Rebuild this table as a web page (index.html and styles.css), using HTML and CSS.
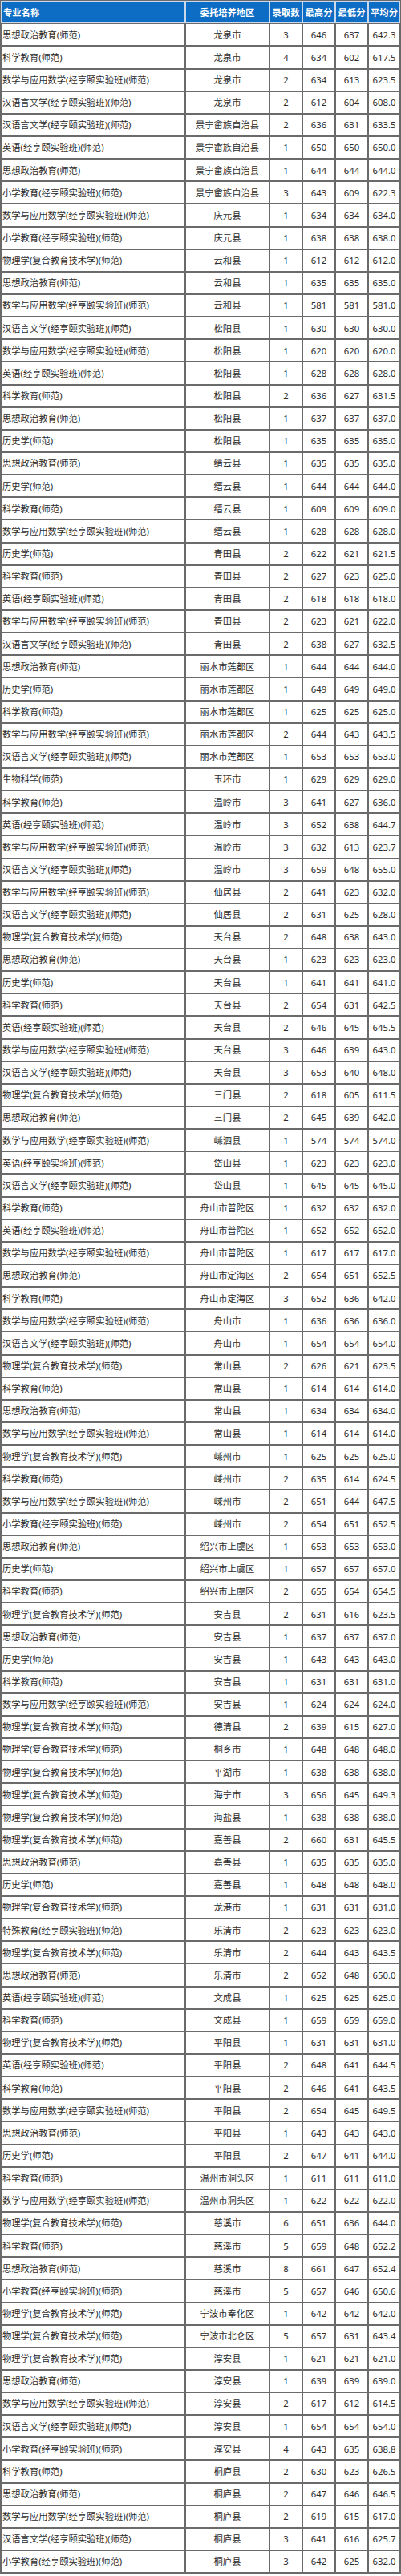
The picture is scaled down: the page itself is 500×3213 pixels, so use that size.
FILE: index.html
```html
<!DOCTYPE html>
<html lang="zh-CN">
<head>
<meta charset="utf-8">
<title>委托培养录取分数</title>
<link rel="stylesheet" href="styles.css">
</head>
<body>
<div class="table" role="table">
  <div class="row head" role="row">
    <div class="cell name" role="columnheader">专业名称</div>
    <div class="cell" role="columnheader">委托培养地区</div>
    <div class="cell" role="columnheader">录取数</div>
    <div class="cell" role="columnheader">最高分</div>
    <div class="cell" role="columnheader">最低分</div>
    <div class="cell" role="columnheader">平均分</div>
  </div>
  <div class="row"><div class="cell name">思想政治教育(师范)</div><div class="cell">龙泉市</div><div class="cell">3</div><div class="cell">646</div><div class="cell">637</div><div class="cell">642.3</div></div>
  <div class="row"><div class="cell name">科学教育(师范)</div><div class="cell">龙泉市</div><div class="cell">4</div><div class="cell">634</div><div class="cell">602</div><div class="cell">617.5</div></div>
  <div class="row"><div class="cell name">数学与应用数学(经亨颐实验班)(师范)</div><div class="cell">龙泉市</div><div class="cell">2</div><div class="cell">634</div><div class="cell">613</div><div class="cell">623.5</div></div>
  <div class="row"><div class="cell name">汉语言文学(经亨颐实验班)(师范)</div><div class="cell">龙泉市</div><div class="cell">2</div><div class="cell">612</div><div class="cell">604</div><div class="cell">608.0</div></div>
  <div class="row"><div class="cell name">汉语言文学(经亨颐实验班)(师范)</div><div class="cell">景宁畲族自治县</div><div class="cell">2</div><div class="cell">636</div><div class="cell">631</div><div class="cell">633.5</div></div>
  <div class="row"><div class="cell name">英语(经亨颐实验班)(师范)</div><div class="cell">景宁畲族自治县</div><div class="cell">1</div><div class="cell">650</div><div class="cell">650</div><div class="cell">650.0</div></div>
  <div class="row"><div class="cell name">思想政治教育(师范)</div><div class="cell">景宁畲族自治县</div><div class="cell">1</div><div class="cell">644</div><div class="cell">644</div><div class="cell">644.0</div></div>
  <div class="row"><div class="cell name">小学教育(经亨颐实验班)(师范)</div><div class="cell">景宁畲族自治县</div><div class="cell">3</div><div class="cell">643</div><div class="cell">609</div><div class="cell">622.3</div></div>
  <div class="row"><div class="cell name">数学与应用数学(经亨颐实验班)(师范)</div><div class="cell">庆元县</div><div class="cell">1</div><div class="cell">634</div><div class="cell">634</div><div class="cell">634.0</div></div>
  <div class="row"><div class="cell name">小学教育(经亨颐实验班)(师范)</div><div class="cell">庆元县</div><div class="cell">1</div><div class="cell">638</div><div class="cell">638</div><div class="cell">638.0</div></div>
  <div class="row"><div class="cell name">物理学(复合教育技术学)(师范)</div><div class="cell">云和县</div><div class="cell">1</div><div class="cell">612</div><div class="cell">612</div><div class="cell">612.0</div></div>
  <div class="row"><div class="cell name">思想政治教育(师范)</div><div class="cell">云和县</div><div class="cell">1</div><div class="cell">635</div><div class="cell">635</div><div class="cell">635.0</div></div>
  <div class="row"><div class="cell name">数学与应用数学(经亨颐实验班)(师范)</div><div class="cell">云和县</div><div class="cell">1</div><div class="cell">581</div><div class="cell">581</div><div class="cell">581.0</div></div>
  <div class="row"><div class="cell name">汉语言文学(经亨颐实验班)(师范)</div><div class="cell">松阳县</div><div class="cell">1</div><div class="cell">630</div><div class="cell">630</div><div class="cell">630.0</div></div>
  <div class="row"><div class="cell name">数学与应用数学(经亨颐实验班)(师范)</div><div class="cell">松阳县</div><div class="cell">1</div><div class="cell">620</div><div class="cell">620</div><div class="cell">620.0</div></div>
  <div class="row"><div class="cell name">英语(经亨颐实验班)(师范)</div><div class="cell">松阳县</div><div class="cell">1</div><div class="cell">628</div><div class="cell">628</div><div class="cell">628.0</div></div>
  <div class="row"><div class="cell name">科学教育(师范)</div><div class="cell">松阳县</div><div class="cell">2</div><div class="cell">636</div><div class="cell">627</div><div class="cell">631.5</div></div>
  <div class="row"><div class="cell name">思想政治教育(师范)</div><div class="cell">松阳县</div><div class="cell">1</div><div class="cell">637</div><div class="cell">637</div><div class="cell">637.0</div></div>
  <div class="row"><div class="cell name">历史学(师范)</div><div class="cell">松阳县</div><div class="cell">1</div><div class="cell">635</div><div class="cell">635</div><div class="cell">635.0</div></div>
  <div class="row"><div class="cell name">思想政治教育(师范)</div><div class="cell">缙云县</div><div class="cell">1</div><div class="cell">635</div><div class="cell">635</div><div class="cell">635.0</div></div>
  <div class="row"><div class="cell name">历史学(师范)</div><div class="cell">缙云县</div><div class="cell">1</div><div class="cell">644</div><div class="cell">644</div><div class="cell">644.0</div></div>
  <div class="row"><div class="cell name">科学教育(师范)</div><div class="cell">缙云县</div><div class="cell">1</div><div class="cell">609</div><div class="cell">609</div><div class="cell">609.0</div></div>
  <div class="row"><div class="cell name">数学与应用数学(经亨颐实验班)(师范)</div><div class="cell">缙云县</div><div class="cell">1</div><div class="cell">628</div><div class="cell">628</div><div class="cell">628.0</div></div>
  <div class="row"><div class="cell name">历史学(师范)</div><div class="cell">青田县</div><div class="cell">2</div><div class="cell">622</div><div class="cell">621</div><div class="cell">621.5</div></div>
  <div class="row"><div class="cell name">科学教育(师范)</div><div class="cell">青田县</div><div class="cell">2</div><div class="cell">627</div><div class="cell">623</div><div class="cell">625.0</div></div>
  <div class="row"><div class="cell name">英语(经亨颐实验班)(师范)</div><div class="cell">青田县</div><div class="cell">2</div><div class="cell">618</div><div class="cell">618</div><div class="cell">618.0</div></div>
  <div class="row"><div class="cell name">数学与应用数学(经亨颐实验班)(师范)</div><div class="cell">青田县</div><div class="cell">2</div><div class="cell">623</div><div class="cell">621</div><div class="cell">622.0</div></div>
  <div class="row"><div class="cell name">汉语言文学(经亨颐实验班)(师范)</div><div class="cell">青田县</div><div class="cell">2</div><div class="cell">638</div><div class="cell">627</div><div class="cell">632.5</div></div>
  <div class="row"><div class="cell name">思想政治教育(师范)</div><div class="cell">丽水市莲都区</div><div class="cell">1</div><div class="cell">644</div><div class="cell">644</div><div class="cell">644.0</div></div>
  <div class="row"><div class="cell name">历史学(师范)</div><div class="cell">丽水市莲都区</div><div class="cell">1</div><div class="cell">649</div><div class="cell">649</div><div class="cell">649.0</div></div>
  <div class="row"><div class="cell name">科学教育(师范)</div><div class="cell">丽水市莲都区</div><div class="cell">1</div><div class="cell">625</div><div class="cell">625</div><div class="cell">625.0</div></div>
  <div class="row"><div class="cell name">数学与应用数学(经亨颐实验班)(师范)</div><div class="cell">丽水市莲都区</div><div class="cell">2</div><div class="cell">644</div><div class="cell">643</div><div class="cell">643.5</div></div>
  <div class="row"><div class="cell name">汉语言文学(经亨颐实验班)(师范)</div><div class="cell">丽水市莲都区</div><div class="cell">1</div><div class="cell">653</div><div class="cell">653</div><div class="cell">653.0</div></div>
  <div class="row"><div class="cell name">生物科学(师范)</div><div class="cell">玉环市</div><div class="cell">1</div><div class="cell">629</div><div class="cell">629</div><div class="cell">629.0</div></div>
  <div class="row"><div class="cell name">科学教育(师范)</div><div class="cell">温岭市</div><div class="cell">3</div><div class="cell">641</div><div class="cell">627</div><div class="cell">636.0</div></div>
  <div class="row"><div class="cell name">英语(经亨颐实验班)(师范)</div><div class="cell">温岭市</div><div class="cell">3</div><div class="cell">652</div><div class="cell">638</div><div class="cell">644.7</div></div>
  <div class="row"><div class="cell name">数学与应用数学(经亨颐实验班)(师范)</div><div class="cell">温岭市</div><div class="cell">3</div><div class="cell">632</div><div class="cell">613</div><div class="cell">623.7</div></div>
  <div class="row"><div class="cell name">汉语言文学(经亨颐实验班)(师范)</div><div class="cell">温岭市</div><div class="cell">3</div><div class="cell">659</div><div class="cell">648</div><div class="cell">655.0</div></div>
  <div class="row"><div class="cell name">数学与应用数学(经亨颐实验班)(师范)</div><div class="cell">仙居县</div><div class="cell">2</div><div class="cell">641</div><div class="cell">623</div><div class="cell">632.0</div></div>
  <div class="row"><div class="cell name">汉语言文学(经亨颐实验班)(师范)</div><div class="cell">仙居县</div><div class="cell">2</div><div class="cell">631</div><div class="cell">625</div><div class="cell">628.0</div></div>
  <div class="row"><div class="cell name">物理学(复合教育技术学)(师范)</div><div class="cell">天台县</div><div class="cell">2</div><div class="cell">648</div><div class="cell">638</div><div class="cell">643.0</div></div>
  <div class="row"><div class="cell name">思想政治教育(师范)</div><div class="cell">天台县</div><div class="cell">1</div><div class="cell">623</div><div class="cell">623</div><div class="cell">623.0</div></div>
  <div class="row"><div class="cell name">历史学(师范)</div><div class="cell">天台县</div><div class="cell">1</div><div class="cell">641</div><div class="cell">641</div><div class="cell">641.0</div></div>
  <div class="row"><div class="cell name">科学教育(师范)</div><div class="cell">天台县</div><div class="cell">2</div><div class="cell">654</div><div class="cell">631</div><div class="cell">642.5</div></div>
  <div class="row"><div class="cell name">英语(经亨颐实验班)(师范)</div><div class="cell">天台县</div><div class="cell">2</div><div class="cell">646</div><div class="cell">645</div><div class="cell">645.5</div></div>
  <div class="row"><div class="cell name">数学与应用数学(经亨颐实验班)(师范)</div><div class="cell">天台县</div><div class="cell">3</div><div class="cell">646</div><div class="cell">639</div><div class="cell">643.0</div></div>
  <div class="row"><div class="cell name">汉语言文学(经亨颐实验班)(师范)</div><div class="cell">天台县</div><div class="cell">3</div><div class="cell">653</div><div class="cell">640</div><div class="cell">648.0</div></div>
  <div class="row"><div class="cell name">物理学(复合教育技术学)(师范)</div><div class="cell">三门县</div><div class="cell">2</div><div class="cell">618</div><div class="cell">605</div><div class="cell">611.5</div></div>
  <div class="row"><div class="cell name">思想政治教育(师范)</div><div class="cell">三门县</div><div class="cell">2</div><div class="cell">645</div><div class="cell">639</div><div class="cell">642.0</div></div>
  <div class="row"><div class="cell name">数学与应用数学(经亨颐实验班)(师范)</div><div class="cell">嵊泗县</div><div class="cell">1</div><div class="cell">574</div><div class="cell">574</div><div class="cell">574.0</div></div>
  <div class="row"><div class="cell name">英语(经亨颐实验班)(师范)</div><div class="cell">岱山县</div><div class="cell">1</div><div class="cell">623</div><div class="cell">623</div><div class="cell">623.0</div></div>
  <div class="row"><div class="cell name">汉语言文学(经亨颐实验班)(师范)</div><div class="cell">岱山县</div><div class="cell">1</div><div class="cell">645</div><div class="cell">645</div><div class="cell">645.0</div></div>
  <div class="row"><div class="cell name">科学教育(师范)</div><div class="cell">舟山市普陀区</div><div class="cell">1</div><div class="cell">632</div><div class="cell">632</div><div class="cell">632.0</div></div>
  <div class="row"><div class="cell name">英语(经亨颐实验班)(师范)</div><div class="cell">舟山市普陀区</div><div class="cell">1</div><div class="cell">652</div><div class="cell">652</div><div class="cell">652.0</div></div>
  <div class="row"><div class="cell name">数学与应用数学(经亨颐实验班)(师范)</div><div class="cell">舟山市普陀区</div><div class="cell">1</div><div class="cell">617</div><div class="cell">617</div><div class="cell">617.0</div></div>
  <div class="row"><div class="cell name">思想政治教育(师范)</div><div class="cell">舟山市定海区</div><div class="cell">2</div><div class="cell">654</div><div class="cell">651</div><div class="cell">652.5</div></div>
  <div class="row"><div class="cell name">科学教育(师范)</div><div class="cell">舟山市定海区</div><div class="cell">3</div><div class="cell">652</div><div class="cell">636</div><div class="cell">642.0</div></div>
  <div class="row"><div class="cell name">数学与应用数学(经亨颐实验班)(师范)</div><div class="cell">舟山市</div><div class="cell">1</div><div class="cell">636</div><div class="cell">636</div><div class="cell">636.0</div></div>
  <div class="row"><div class="cell name">汉语言文学(经亨颐实验班)(师范)</div><div class="cell">舟山市</div><div class="cell">1</div><div class="cell">654</div><div class="cell">654</div><div class="cell">654.0</div></div>
  <div class="row"><div class="cell name">物理学(复合教育技术学)(师范)</div><div class="cell">常山县</div><div class="cell">2</div><div class="cell">626</div><div class="cell">621</div><div class="cell">623.5</div></div>
  <div class="row"><div class="cell name">科学教育(师范)</div><div class="cell">常山县</div><div class="cell">1</div><div class="cell">614</div><div class="cell">614</div><div class="cell">614.0</div></div>
  <div class="row"><div class="cell name">思想政治教育(师范)</div><div class="cell">常山县</div><div class="cell">1</div><div class="cell">634</div><div class="cell">634</div><div class="cell">634.0</div></div>
  <div class="row"><div class="cell name">数学与应用数学(经亨颐实验班)(师范)</div><div class="cell">常山县</div><div class="cell">1</div><div class="cell">614</div><div class="cell">614</div><div class="cell">614.0</div></div>
  <div class="row"><div class="cell name">物理学(复合教育技术学)(师范)</div><div class="cell">嵊州市</div><div class="cell">1</div><div class="cell">625</div><div class="cell">625</div><div class="cell">625.0</div></div>
  <div class="row"><div class="cell name">科学教育(师范)</div><div class="cell">嵊州市</div><div class="cell">2</div><div class="cell">635</div><div class="cell">614</div><div class="cell">624.5</div></div>
  <div class="row"><div class="cell name">数学与应用数学(经亨颐实验班)(师范)</div><div class="cell">嵊州市</div><div class="cell">2</div><div class="cell">651</div><div class="cell">644</div><div class="cell">647.5</div></div>
  <div class="row"><div class="cell name">小学教育(经亨颐实验班)(师范)</div><div class="cell">嵊州市</div><div class="cell">2</div><div class="cell">654</div><div class="cell">651</div><div class="cell">652.5</div></div>
  <div class="row"><div class="cell name">思想政治教育(师范)</div><div class="cell">绍兴市上虞区</div><div class="cell">1</div><div class="cell">653</div><div class="cell">653</div><div class="cell">653.0</div></div>
  <div class="row"><div class="cell name">历史学(师范)</div><div class="cell">绍兴市上虞区</div><div class="cell">1</div><div class="cell">657</div><div class="cell">657</div><div class="cell">657.0</div></div>
  <div class="row"><div class="cell name">科学教育(师范)</div><div class="cell">绍兴市上虞区</div><div class="cell">2</div><div class="cell">655</div><div class="cell">654</div><div class="cell">654.5</div></div>
  <div class="row"><div class="cell name">物理学(复合教育技术学)(师范)</div><div class="cell">安吉县</div><div class="cell">2</div><div class="cell">631</div><div class="cell">616</div><div class="cell">623.5</div></div>
  <div class="row"><div class="cell name">思想政治教育(师范)</div><div class="cell">安吉县</div><div class="cell">1</div><div class="cell">637</div><div class="cell">637</div><div class="cell">637.0</div></div>
  <div class="row"><div class="cell name">历史学(师范)</div><div class="cell">安吉县</div><div class="cell">1</div><div class="cell">643</div><div class="cell">643</div><div class="cell">643.0</div></div>
  <div class="row"><div class="cell name">科学教育(师范)</div><div class="cell">安吉县</div><div class="cell">1</div><div class="cell">631</div><div class="cell">631</div><div class="cell">631.0</div></div>
  <div class="row"><div class="cell name">数学与应用数学(经亨颐实验班)(师范)</div><div class="cell">安吉县</div><div class="cell">1</div><div class="cell">624</div><div class="cell">624</div><div class="cell">624.0</div></div>
  <div class="row"><div class="cell name">物理学(复合教育技术学)(师范)</div><div class="cell">德清县</div><div class="cell">2</div><div class="cell">639</div><div class="cell">615</div><div class="cell">627.0</div></div>
  <div class="row"><div class="cell name">物理学(复合教育技术学)(师范)</div><div class="cell">桐乡市</div><div class="cell">1</div><div class="cell">648</div><div class="cell">648</div><div class="cell">648.0</div></div>
  <div class="row"><div class="cell name">物理学(复合教育技术学)(师范)</div><div class="cell">平湖市</div><div class="cell">1</div><div class="cell">638</div><div class="cell">638</div><div class="cell">638.0</div></div>
  <div class="row"><div class="cell name">物理学(复合教育技术学)(师范)</div><div class="cell">海宁市</div><div class="cell">3</div><div class="cell">656</div><div class="cell">645</div><div class="cell">649.3</div></div>
  <div class="row"><div class="cell name">物理学(复合教育技术学)(师范)</div><div class="cell">海盐县</div><div class="cell">1</div><div class="cell">638</div><div class="cell">638</div><div class="cell">638.0</div></div>
  <div class="row"><div class="cell name">物理学(复合教育技术学)(师范)</div><div class="cell">嘉善县</div><div class="cell">2</div><div class="cell">660</div><div class="cell">631</div><div class="cell">645.5</div></div>
  <div class="row"><div class="cell name">思想政治教育(师范)</div><div class="cell">嘉善县</div><div class="cell">1</div><div class="cell">635</div><div class="cell">635</div><div class="cell">635.0</div></div>
  <div class="row"><div class="cell name">历史学(师范)</div><div class="cell">嘉善县</div><div class="cell">1</div><div class="cell">648</div><div class="cell">648</div><div class="cell">648.0</div></div>
  <div class="row"><div class="cell name">物理学(复合教育技术学)(师范)</div><div class="cell">龙港市</div><div class="cell">1</div><div class="cell">631</div><div class="cell">631</div><div class="cell">631.0</div></div>
  <div class="row"><div class="cell name">特殊教育(经亨颐实验班)(师范)</div><div class="cell">乐清市</div><div class="cell">2</div><div class="cell">623</div><div class="cell">623</div><div class="cell">623.0</div></div>
  <div class="row"><div class="cell name">物理学(复合教育技术学)(师范)</div><div class="cell">乐清市</div><div class="cell">2</div><div class="cell">644</div><div class="cell">643</div><div class="cell">643.5</div></div>
  <div class="row"><div class="cell name">思想政治教育(师范)</div><div class="cell">乐清市</div><div class="cell">2</div><div class="cell">652</div><div class="cell">648</div><div class="cell">650.0</div></div>
  <div class="row"><div class="cell name">英语(经亨颐实验班)(师范)</div><div class="cell">文成县</div><div class="cell">1</div><div class="cell">625</div><div class="cell">625</div><div class="cell">625.0</div></div>
  <div class="row"><div class="cell name">科学教育(师范)</div><div class="cell">文成县</div><div class="cell">1</div><div class="cell">659</div><div class="cell">659</div><div class="cell">659.0</div></div>
  <div class="row"><div class="cell name">物理学(复合教育技术学)(师范)</div><div class="cell">平阳县</div><div class="cell">1</div><div class="cell">631</div><div class="cell">631</div><div class="cell">631.0</div></div>
  <div class="row"><div class="cell name">英语(经亨颐实验班)(师范)</div><div class="cell">平阳县</div><div class="cell">2</div><div class="cell">648</div><div class="cell">641</div><div class="cell">644.5</div></div>
  <div class="row"><div class="cell name">科学教育(师范)</div><div class="cell">平阳县</div><div class="cell">2</div><div class="cell">646</div><div class="cell">641</div><div class="cell">643.5</div></div>
  <div class="row"><div class="cell name">数学与应用数学(经亨颐实验班)(师范)</div><div class="cell">平阳县</div><div class="cell">2</div><div class="cell">654</div><div class="cell">645</div><div class="cell">649.5</div></div>
  <div class="row"><div class="cell name">思想政治教育(师范)</div><div class="cell">平阳县</div><div class="cell">1</div><div class="cell">643</div><div class="cell">643</div><div class="cell">643.0</div></div>
  <div class="row"><div class="cell name">历史学(师范)</div><div class="cell">平阳县</div><div class="cell">2</div><div class="cell">647</div><div class="cell">641</div><div class="cell">644.0</div></div>
  <div class="row"><div class="cell name">科学教育(师范)</div><div class="cell">温州市洞头区</div><div class="cell">1</div><div class="cell">611</div><div class="cell">611</div><div class="cell">611.0</div></div>
  <div class="row"><div class="cell name">数学与应用数学(经亨颐实验班)(师范)</div><div class="cell">温州市洞头区</div><div class="cell">1</div><div class="cell">622</div><div class="cell">622</div><div class="cell">622.0</div></div>
  <div class="row"><div class="cell name">物理学(复合教育技术学)(师范)</div><div class="cell">慈溪市</div><div class="cell">6</div><div class="cell">651</div><div class="cell">636</div><div class="cell">644.0</div></div>
  <div class="row"><div class="cell name">科学教育(师范)</div><div class="cell">慈溪市</div><div class="cell">5</div><div class="cell">659</div><div class="cell">648</div><div class="cell">652.2</div></div>
  <div class="row"><div class="cell name">思想政治教育(师范)</div><div class="cell">慈溪市</div><div class="cell">8</div><div class="cell">661</div><div class="cell">647</div><div class="cell">652.4</div></div>
  <div class="row"><div class="cell name">小学教育(经亨颐实验班)(师范)</div><div class="cell">慈溪市</div><div class="cell">5</div><div class="cell">657</div><div class="cell">646</div><div class="cell">650.6</div></div>
  <div class="row"><div class="cell name">物理学(复合教育技术学)(师范)</div><div class="cell">宁波市奉化区</div><div class="cell">1</div><div class="cell">642</div><div class="cell">642</div><div class="cell">642.0</div></div>
  <div class="row"><div class="cell name">物理学(复合教育技术学)(师范)</div><div class="cell">宁波市北仑区</div><div class="cell">5</div><div class="cell">657</div><div class="cell">631</div><div class="cell">643.4</div></div>
  <div class="row"><div class="cell name">物理学(复合教育技术学)(师范)</div><div class="cell">淳安县</div><div class="cell">1</div><div class="cell">621</div><div class="cell">621</div><div class="cell">621.0</div></div>
  <div class="row"><div class="cell name">思想政治教育(师范)</div><div class="cell">淳安县</div><div class="cell">1</div><div class="cell">639</div><div class="cell">639</div><div class="cell">639.0</div></div>
  <div class="row"><div class="cell name">数学与应用数学(经亨颐实验班)(师范)</div><div class="cell">淳安县</div><div class="cell">2</div><div class="cell">617</div><div class="cell">612</div><div class="cell">614.5</div></div>
  <div class="row"><div class="cell name">汉语言文学(经亨颐实验班)(师范)</div><div class="cell">淳安县</div><div class="cell">1</div><div class="cell">654</div><div class="cell">654</div><div class="cell">654.0</div></div>
  <div class="row"><div class="cell name">小学教育(经亨颐实验班)(师范)</div><div class="cell">淳安县</div><div class="cell">4</div><div class="cell">643</div><div class="cell">635</div><div class="cell">638.8</div></div>
  <div class="row"><div class="cell name">科学教育(师范)</div><div class="cell">桐庐县</div><div class="cell">2</div><div class="cell">630</div><div class="cell">623</div><div class="cell">626.5</div></div>
  <div class="row"><div class="cell name">思想政治教育(师范)</div><div class="cell">桐庐县</div><div class="cell">2</div><div class="cell">647</div><div class="cell">646</div><div class="cell">646.5</div></div>
  <div class="row"><div class="cell name">数学与应用数学(经亨颐实验班)(师范)</div><div class="cell">桐庐县</div><div class="cell">2</div><div class="cell">619</div><div class="cell">615</div><div class="cell">617.0</div></div>
  <div class="row"><div class="cell name">汉语言文学(经亨颐实验班)(师范)</div><div class="cell">桐庐县</div><div class="cell">3</div><div class="cell">641</div><div class="cell">616</div><div class="cell">625.7</div></div>
  <div class="row"><div class="cell name">小学教育(经亨颐实验班)(师范)</div><div class="cell">桐庐县</div><div class="cell">3</div><div class="cell">642</div><div class="cell">625</div><div class="cell">632.0</div></div>
</div>
</body>
</html>
```
FILE: styles.css
```css
* {
  box-sizing: border-box;
}

html, body {
  margin: 0;
  padding: 0;
  background: #ffffff;
}

body {
  font-family: "Noto Sans", "Noto Sans CJK SC", sans-serif;
  font-size: 11.3px;
  color: #2b2b2b;
}

.table {
  width: 500px;
  border: 1px solid #6a6a6a;
}

.row {
  display: grid;
  grid-template-columns: 230px 105px 41px 41px 41px 40px;
  height: 28.15px;
}

.row.head {
  height: 28.3px;
  background: #0d6cc3;
  color: #ffffff;
  font-weight: 700;
}

.cell {
  display: flex;
  align-items: center;
  justify-content: center;
  border: 1px solid #6a6a6a;
  white-space: nowrap;
  overflow: hidden;
  line-height: 1;
}

.head .cell {
  border-color: #c9d8ea;
}

.cell.name {
  justify-content: flex-start;
  padding-left: 1px;
}

.head .cell.name {
  padding-left: 2px;
}
```
